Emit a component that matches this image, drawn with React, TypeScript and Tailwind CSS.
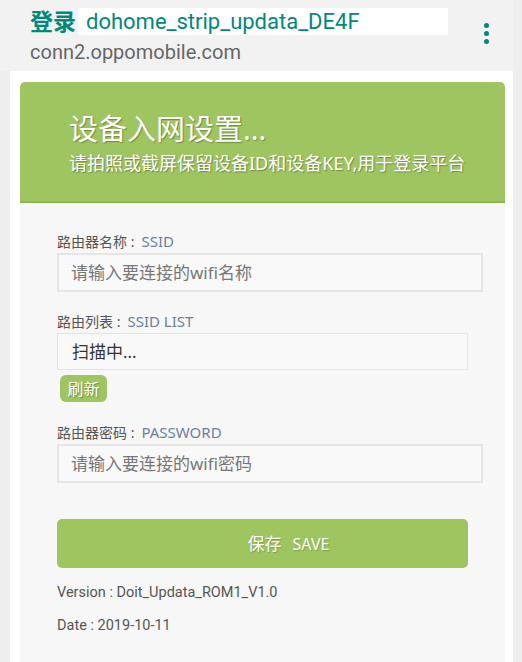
const cjk = "font-['Noto_Sans','Noto_Sans_CJK_SC',sans-serif]";

function Label({ label, en }: { label: string; en: string }) {
  return (
    <div className="flex items-end h-[17px] text-[14px] leading-none">
      <span className="text-[#555]">{label}</span>
      <span className="text-[#6d7f9c] text-[15px] ml-[7px]">{en}</span>
    </div>
  );
}

function Field({ label, en, placeholder }: { label: string; en: string; placeholder: string }) {
  return (
    <div className="flex flex-col">
      <Label label={label} en={en} />
      <div className="mt-[4px] h-[39px] w-[426px] border-2 border-[#e6e6e6] bg-[#f9f9f9] flex items-center pl-[12px] text-[17px] text-[#777]">
        {placeholder}
      </div>
    </div>
  );
}

export default function App() {
  return (
    <div className={`w-[522px] h-[662px] overflow-hidden bg-[#eeeeee] ${cjk}`}>
      <div className="h-[71px] bg-[#f2f2f2] mr-[9px] relative">
        <div className="absolute left-[30px] top-[5px] flex items-center">
          <span className="text-[23px] font-bold text-[#00897b] leading-[32px]">登录</span>
          <span className="ml-[2px] bg-white w-[370px] h-[27px] flex items-center pl-[8px] text-[22px] text-[#00897b] font-['Roboto',sans-serif]">
            dohome_strip_updata_DE4F
          </span>
        </div>
        <div className="absolute left-[30px] top-[37px] text-[20px] text-[#666] font-['Roboto',sans-serif]">
          conn2.oppomobile.com
        </div>
        <div className="absolute left-[484px] top-[23px] flex flex-col gap-[3px]">
          <span className="w-[5px] h-[5px] rounded-full bg-[#00897b]" />
          <span className="w-[5px] h-[5px] rounded-full bg-[#00897b]" />
          <span className="w-[5px] h-[5px] rounded-full bg-[#00897b]" />
        </div>
      </div>
      <div className="ml-[10px] mr-[9px] bg-white h-[591px] px-[10px] pt-[11px] pr-[8px]">
        <div className="h-[121px] bg-[#9ec55f] rounded-t-[5px] border-b-2 border-[#8cb84b] pl-[49px] pt-[28px] text-white [text-shadow:1px_1px_1px_rgba(0,0,0,0.3)]">
          <div className="text-[29px] leading-[38px]">设备入网设置...</div>
          <div className="text-[18px] leading-[24px] mt-[3px]">请拍照或截屏保留设备ID和设备KEY,用于登录平台</div>
        </div>
        <div className="bg-[#f7f7f7] h-[460px] pl-[37px] pt-[29px]">
          <Field label="路由器名称 :" en="SSID" placeholder="请输入要连接的wifi名称" />
          <div className="mt-[20px] flex flex-col">
            <Label label="路由列表 :" en="SSID LIST" />
            <div className="mt-[4px] h-[37px] w-[411px] border border-[#e3e3e3] bg-[#f9f9f9] flex items-center pl-[14px] text-[17px] text-[#333]">
              扫描中...
            </div>
            <div className="mt-[5px] ml-[3px] w-[47px] h-[27px] rounded-[6px] bg-[#9ec55f] flex items-center justify-center text-[16px] text-white [text-shadow:1px_1px_1px_rgba(0,0,0,0.3)]">
              刷新
            </div>
          </div>
          <div className="mt-[21px]">
            <Field label="路由器密码 :" en="PASSWORD" placeholder="请输入要连接的wifi密码" />
          </div>
          <div className="mt-[36px] w-[411px] h-[49px] rounded-[5px] bg-[#9ec55f] flex items-center justify-center pl-[52px] text-white text-[17px] [text-shadow:1px_1px_1px_rgba(0,0,0,0.2)]">
            <span>保存</span>
            <span className="ml-[11px] text-[16px]">SAVE</span>
          </div>
          <div className="mt-[14px] text-[14.5px] text-[#555] font-['Roboto',sans-serif]">Version : Doit_Updata_ROM1_V1.0</div>
          <div className="mt-[11px] text-[14.5px] text-[#555] font-['Roboto',sans-serif]">Date : 2019-10-11</div>
        </div>
      </div>
    </div>
  );
}
